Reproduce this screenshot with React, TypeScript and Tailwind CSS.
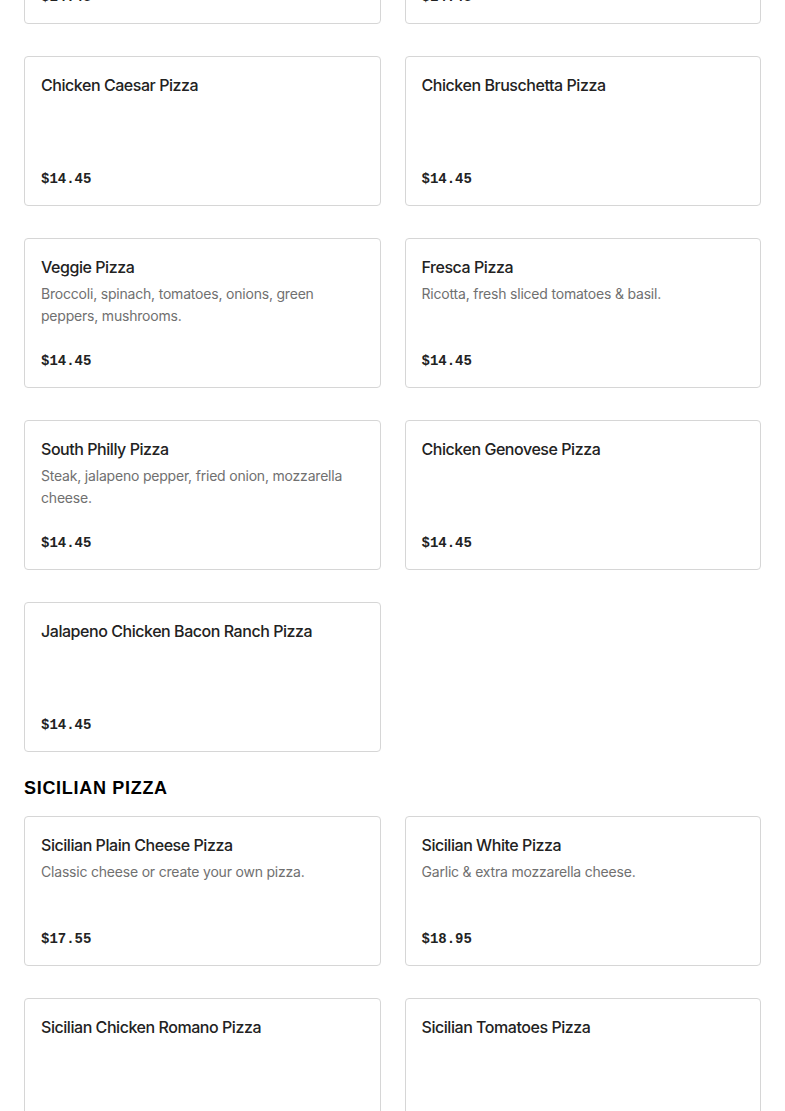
interface Item {
  name: string;
  desc?: string;
  price: string;
}

const PIZZAS: Item[] = [
  { name: "Buffalo Chicken Pizza", price: "$14.45" },
  { name: "BBQ Chicken Pizza", price: "$14.45" },
  { name: "Chicken Caesar Pizza", price: "$14.45" },
  { name: "Chicken Bruschetta Pizza", price: "$14.45" },
  {
    name: "Veggie Pizza",
    desc: "Broccoli, spinach, tomatoes, onions, green peppers, mushrooms.",
    price: "$14.45",
  },
  { name: "Fresca Pizza", desc: "Ricotta, fresh sliced tomatoes & basil.", price: "$14.45" },
  {
    name: "South Philly Pizza",
    desc: "Steak, jalapeno pepper, fried onion, mozzarella cheese.",
    price: "$14.45",
  },
  { name: "Chicken Genovese Pizza", price: "$14.45" },
  { name: "Jalapeno Chicken Bacon Ranch Pizza", price: "$14.45" },
];

const SICILIAN: Item[] = [
  { name: "Sicilian Plain Cheese Pizza", desc: "Classic cheese or create your own pizza.", price: "$17.55" },
  { name: "Sicilian White Pizza", desc: "Garlic & extra mozzarella cheese.", price: "$18.95" },
  { name: "Sicilian Chicken Romano Pizza", price: "$19.95" },
  { name: "Sicilian Tomatoes Pizza", price: "$18.95" },
];

function Card({ item }: { item: Item }) {
  return (
    <div className="flex h-[150px] flex-col rounded border border-[#d6d6d6] bg-white px-4 pt-4 pb-4">
      <h3 className="text-[16px] leading-6 font-medium text-[#222222] font-['Inter',sans-serif] tracking-[-0.45px]">
        {item.name}
      </h3>
      {item.desc && (
        <p className="mt-1 pr-4 text-[14px] leading-[22px] tracking-[-0.2px] text-[#707070] font-['Inter',sans-serif]">
          {item.desc}
        </p>
      )}
      <p className="mt-auto text-[14px] leading-5 font-semibold text-[#222222] font-['Liberation_Mono',monospace]">
        {item.price}
      </p>
    </div>
  );
}

export default function App() {
  return (
    <div className="min-h-screen bg-white px-6">
      <div className="-mt-[126px] grid grid-cols-2 gap-x-6 gap-y-8">
        {PIZZAS.map((p) => (
          <Card key={p.name} item={p} />
        ))}
      </div>

      <h2 className="mt-6 mb-4 text-[18px] leading-6 font-black uppercase tracking-[0.7px] text-black font-['Liberation_Sans',sans-serif]">
        Sicilian Pizza
      </h2>
      <div className="grid grid-cols-2 gap-x-6 gap-y-8 pb-10">
        {SICILIAN.map((p) => (
          <Card key={p.name} item={p} />
        ))}
      </div>
    </div>
  );
}
